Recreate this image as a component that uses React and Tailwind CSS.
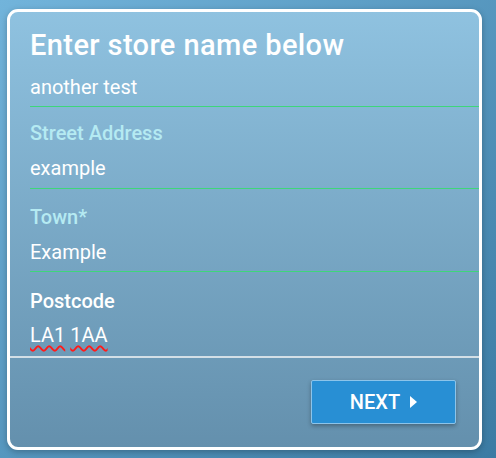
export default function App() {
  return (
    <div className="w-[496px] h-[458px] bg-gradient-to-br from-[#72b4db] to-[#3b7ba3] pt-[9px] pl-[7px] font-['Roboto',sans-serif]">
      <div className="w-[475px] h-[441px] rounded-[11px] border-[3px] border-white bg-gradient-to-b from-[#8fc2e0] to-[#6490ad] flex flex-col shadow-[0_2px_6px_rgba(0,0,0,0.25)]">
        <div className="ml-[20px] pt-[16px]">
          <h1 className="text-[29px] leading-[34px] font-medium tracking-[0.4px] text-white">Enter store name below</h1>
          <div className="mt-[13px] h-[31px] text-[20px] leading-[24px] text-white">another test</div>
          <div className="h-px bg-[#3ed67a]" />
        </div>
        <div className="ml-[20px] pt-[14px] h-[81px]">
          <div className="text-[20px] leading-[24px] font-medium text-[#b5eaf2]">Street Address</div>
          <div className="mt-[11px] text-[20px] leading-[24px] text-white">example</div>
        </div>
        <div className="ml-[20px] h-px bg-[#3ed67a]" />
        <div className="ml-[20px] pt-[16px] h-[82px]">
          <div className="text-[20px] leading-[24px] font-medium text-[#b5eaf2]">Town*</div>
          <div className="mt-[11px] text-[20px] leading-[24px] text-white">Example</div>
        </div>
        <div className="ml-[20px] h-px bg-[#3ed67a]" />
        <div className="pt-[17px] h-[84px]">
          <div className="ml-[20px] text-[20px] leading-[24px] font-medium text-white">Postcode</div>
          <div className="ml-[20px] mt-[10px] text-[20px] leading-[24px] text-white">
            <span className="underline decoration-wavy decoration-[#ff1a1a] decoration-[1.5px] underline-offset-[3px]">LA1</span>{" "}
            <span className="underline decoration-wavy decoration-[#ff1a1a] decoration-[1.5px] underline-offset-[3px]">1AA</span>
          </div>
        </div>
        <div className="h-[2px] bg-[#d3dfe6]" />
        <div className="flex justify-end pt-[22px] pr-[23px]">
          <button className="w-[145px] h-[44px] flex items-center justify-center gap-[10px] bg-[#288fd4] border border-[#8cc4ea] rounded-[2px] text-white text-[20px] font-medium shadow-[0_2px_4px_rgba(0,0,0,0.3)]">
            NEXT
            <svg width="7" height="12" viewBox="0 0 7 12"><path d="M0 0 L7 6 L0 12 Z" fill="white" /></svg>
          </button>
        </div>
      </div>
    </div>
  );
}
